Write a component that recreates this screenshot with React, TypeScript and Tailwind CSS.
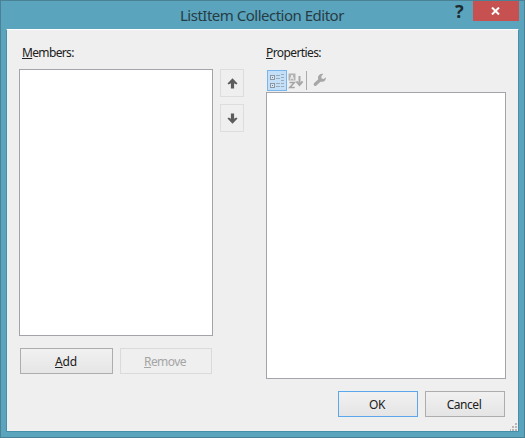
import type { ReactNode } from "react";

function Arrow({ down = false }: { down?: boolean }) {
  return (
    <svg width="11" height="11" viewBox="0 0 11 11" className={down ? "rotate-180" : ""}>
      <path d="M5.5 0.3 L10.5 5.4 L9.3 6.6 L7.1 5.3 V10.5 H3.9 V5.3 L1.7 6.6 L0.5 5.4 Z" fill="#5c5c5c" />
    </svg>
  );
}

function ArrowButton({ down = false }: { down?: boolean }) {
  return (
    <button className="flex h-7 w-6 items-center justify-center border border-[#dddddd] bg-[#efefef]">
      <Arrow down={down} />
    </button>
  );
}

function PushButton({ className, children }: { className: string; children: ReactNode }) {
  return (
    <button className={"flex h-[26px] items-center justify-center border pt-px text-[12px] leading-none " + className}>
      {children}
    </button>
  );
}

function CategorizedIcon() {
  return (
    <svg width="16" height="16" viewBox="0 0 16 16" shapeRendering="crispEdges">
      <g fill="#dce6ee" stroke="#8b98a4">
        <rect x="1.5" y="2.5" width="4" height="4" />
        <rect x="1.5" y="10.5" width="4" height="4" />
      </g>
      <path d="M3 4.5h1M3 12.5h1" stroke="#71808d" />
      <path d="M7 2.5h4M7 5.5h4M7 10.5h4M7 13.5h4M12 1.5h3M12 4.5h3M12 7.5h3M12 10.5h3M12 13.5h3" stroke="#9baab7" />
    </svg>
  );
}

function AlphabeticalIcon() {
  return (
    <svg width="16" height="16" viewBox="0 0 16 16" fill="none">
      <rect x="0.5" y="0.5" width="7" height="7" fill="#b2b2b2" />
      <path d="M2.4 6.5 L4 2 L5.6 6.5 M2.8 5.1H5.2" stroke="#f1f1f1" strokeWidth="1" />
      <path d="M1.5 9.5H6.3L1.7 14.5H6.7" stroke="#a5a5a5" strokeWidth="1.6" />
      <path d="M11.5 3V12" stroke="#a8a8a8" strokeWidth="2" />
      <path d="M8.4 8.3L11.5 12L14.6 8.3" stroke="#a8a8a8" strokeWidth="2" />
    </svg>
  );
}

function WrenchIcon() {
  return (
    <svg width="14" height="14" viewBox="0 0 14 14">
      <path d="M2.3 11.3 L7 7" stroke="#a7a7a7" strokeWidth="3.2" strokeLinecap="round" />
      <path d="M10.4 0.8 C7.6 .2 4.8 2 4.9 4.7 C4.9 7.4 7 9 9.2 8.8 C11.6 8.7 13.2 6.6 12.8 4.2 L10.6 6 L8.6 5.5 L8.4 3.2 Z" fill="#a7a7a7" />
    </svg>
  );
}

export default function App() {
  return (
    <div className="flex h-[438px] w-[525px] flex-col border border-[#4a8195] bg-[#5ba4bd] font-['Noto_Sans','Open_Sans',sans-serif] text-[#202020]">
      <header className="flex h-7 shrink-0 items-start">
        <h1 className="ml-[179px] mt-[4px] w-[260px] whitespace-nowrap text-[15px] font-normal leading-5 tracking-[-0.5px] text-[#263c45]">
          ListItem Collection Editor
        </h1>
        <div className="ml-[15px] mt-[2px] w-[18px] text-[18px] font-bold leading-4 text-[#1e2c32]">?</div>
        <button className="flex h-5 w-[46px] items-center justify-center bg-[#c75050]">
          <svg width="9" height="8" viewBox="0 0 9 8" className="-ml-px">
            <path d="M1 .5L8 7.5M8 .5L1 7.5" stroke="white" strokeWidth="2" />
          </svg>
        </button>
      </header>

      <main className="mx-[5px] flex h-[403px] shrink-0 flex-col border border-t-[#ffffff] border-r-[#468fa8] border-b-[#468fa8] border-l-[#468fa8] bg-[#efefef] pt-4">
        <div className="flex h-[334px] shrink-0">
          <section className="ml-3 w-[194px]">
            <div className="ml-[3px] h-[23px] text-[12px] leading-[14px] tracking-[-0.65px]">
              <span className="underline">M</span>embers:
            </div>
            <div className="h-[267px] border border-[#a3a3aa] bg-white" />
            <div className="ml-px mt-3 flex gap-[7px]">
              <PushButton className="w-[93px] border-[#adadad] bg-linear-to-b from-[#f1f1f1] to-[#e5e5e5] tracking-[-0.2px]">
                <span className="-ml-px"><span className="underline">A</span>dd</span>
              </PushButton>
              <PushButton className="w-[92px] border-[#dadada] bg-[#efefef] tracking-[-0.55px] text-[#a5a5a5]">
                <span className="-ml-0.5"><span className="underline">R</span>emove</span>
              </PushButton>
            </div>
          </section>

          <div className="ml-[7px] flex w-6 flex-col gap-[7px] pt-[23px]">
            <ArrowButton />
            <ArrowButton down />
          </div>

          <section className="ml-[22px] w-[240px]">
            <div className="h-6 text-[12px] leading-[14px] tracking-[-0.6px]">
              <span className="underline">P</span>roperties:
            </div>
            <div className="flex h-[22px] items-start pl-px">
              <div className="flex h-[21px] w-5 items-center justify-center border border-[#78b5ed] bg-[#c4e0f8]">
                <CategorizedIcon />
              </div>
              <div className="ml-px mt-[3px]"><AlphabeticalIcon /></div>
              <div className="ml-0.5 mt-px h-[19px] w-px bg-[#aaaaaa]" />
              <div className="ml-[6px] mt-[3px]"><WrenchIcon /></div>
            </div>
            <div className="h-[287px] border border-[#a3a3aa] bg-white" />
          </section>
        </div>

        <footer className="mt-[11px] flex justify-end gap-[7px] pr-[13px]">
          <PushButton className="w-[80px] border-[#5ba7ee] bg-linear-to-b from-[#f1f1f1] to-[#e5e5e5] tracking-[-0.4px]">
            <span className="-ml-0.5">OK</span>
          </PushButton>
          <PushButton className="w-[80px] border-[#adadad] bg-linear-to-b from-[#f1f1f1] to-[#e5e5e5] tracking-[-0.45px]">
            <span className="-ml-0.5">Cancel</span>
          </PushButton>
        </footer>
        <div className="mt-auto flex justify-end">
          <svg width="8" height="8" viewBox="0 0 8 8" fill="#b7b7b7">
            <path d="M5 0h2v2h-2zM2 3h2v2h-2zM5 3h2v2h-2zM-1 6h2v2h-2zM2 6h2v2h-2zM5 6h2v2h-2z" />
          </svg>
        </div>
      </main>
    </div>
  );
}
